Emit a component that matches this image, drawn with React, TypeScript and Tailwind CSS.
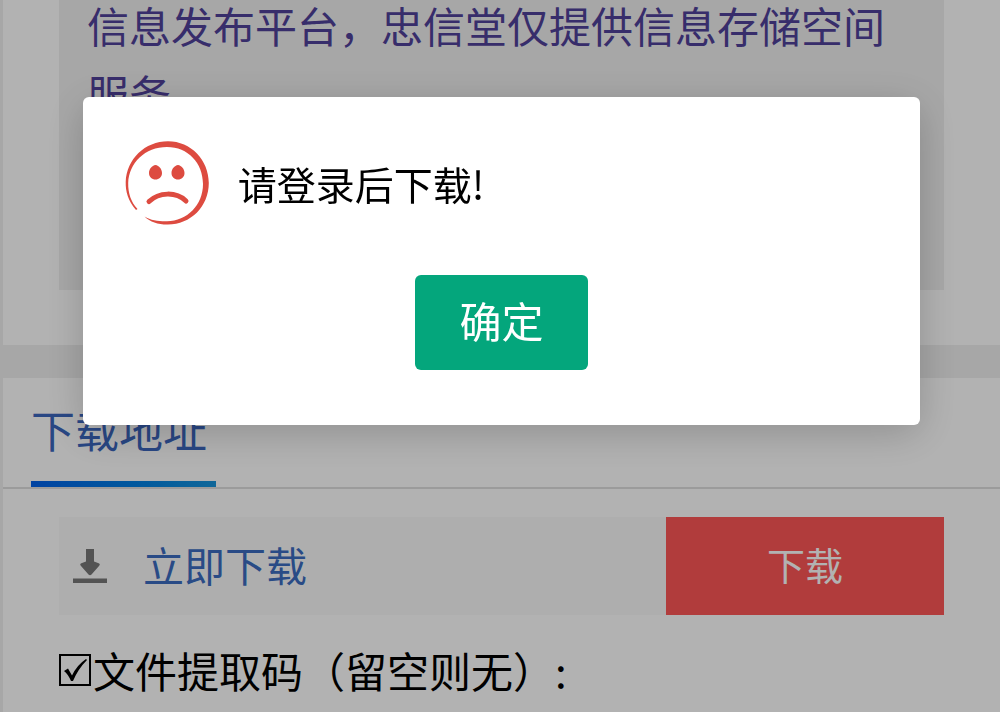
import { useState } from "react";

function SadFace() {
  return (
    <svg viewBox="0 0 84 84" className="size-[84px] shrink-0" fill="none" aria-hidden="true">
      <path
        d="M11 69C3 60 .5 50 .7 41C1.500 18 20 .2 43 .2C66 .2 83.800 19 83.800 42C83.800 66 65 84 42 83.500C33 83.500 25 81 19.500 75.500C26 79.500 34 80.500 42 80.300C62 80 78 64 78 43C78 22 63 6 42 6C20 6 4 22 3.200 42C3 52 6 61 12.500 68Z"
        fill="#dd4b40"
      />
      <path
        d="M30.500 24C34 24.500 37 28 37 32C37 36 34 38.500 30.500 38.500C27 38.500 24 36 24 32C24 28 27 24.500 30.500 24ZM53 24C56.500 24.500 59.500 28 59.500 32C59.500 36 56.500 38.500 53 38.500C49.500 38.500 46.500 36 46.500 32C46.500 28 49.500 24.500 53 24Z"
        fill="#dd4b40"
      />
      <path d="M24 60.500C34 51 51 50.500 61 60" stroke="#dd4b40" strokeWidth="5" strokeLinecap="round" />
    </svg>
  );
}

function DownloadIcon() {
  return (
    <svg viewBox="0 0 34 34" className="size-[34px] shrink-0" fill="#777" aria-hidden="true">
      <path d="M13 0H21V12.500L25 14Q28 15 26 17L18.500 25.500Q17 27 15.500 25.500L8 17Q6 15 9 14L13 12.500Z" />
      <path d="M0 29.500H34V34H0Z" />
    </svg>
  );
}

function LoginDialog({ onClose }: { onClose: () => void }) {
  return (
    <div className="fixed inset-0 flex items-start justify-center bg-black/30 pt-[97px] pl-[3px]">
      <div
        role="alertdialog"
        aria-modal="true"
        aria-labelledby="dialog-message"
        className="flex w-[84%] flex-col rounded-md bg-white px-[42px] pt-11 pb-[55px] shadow-[0_8px_40px_rgba(0,0,0,0.2)]"
      >
        <div className="flex items-center gap-[29px]">
          <SadFace />
          <p id="dialog-message" className="text-[39px] leading-[60px] text-black">
            请登录后下载!
          </p>
        </div>
        <button
          type="button"
          onClick={onClose}
          className="mt-[50px] self-center rounded-md bg-[#04a67c] px-11 pt-3.5 pb-[19px] text-[42px] leading-[62px] text-white"
        >
          确定
        </button>
      </div>
    </div>
  );
}

export default function App() {
  const [open, setOpen] = useState(true);

  return (
    <div className="min-h-screen overflow-hidden bg-[#efefef] pl-[3px] font-['Noto_Sans_CJK_SC',sans-serif]">
      <section className="bg-white px-14 pb-[55px]">
        <p className="-mt-[9px] bg-[#f0f0f0] px-7 pb-[163px] text-[42px] leading-[68px] text-[#50419a]">
          信息发布平台，忠信堂仅提供信息存储空间服务
        </p>
      </section>

      <section className="mt-[33px] bg-white">
        <div className="flex border-b-2 border-[#dedede] px-7">
          <h2 className="flex flex-col text-[44px] leading-[62px] text-[#3b66bd]">
            <span className="pt-5 pr-[9px] pb-[21px]">下载地址</span>
            <span className="h-[6px] bg-linear-to-r from-[#0060e8] to-[#1794dc]" />
          </h2>
        </div>
        <div className="px-14 pt-7 pb-6">
          <div className="flex items-stretch bg-[#fafafa]">
            <a href="#download" className="flex flex-1 items-center gap-9 px-[14px] text-[41px] leading-[62px] text-[#3b6cc0]">
              <DownloadIcon />
              <span className="pb-1">立即下载</span>
            </a>
            <button type="button" className="w-[278px] bg-[#fe5656] pt-4 pb-5 text-[38px] leading-[62px] text-white">
              下载
            </button>
          </div>
          <label className="mt-6 flex items-center text-[42px] leading-[62px] text-black">
            <span className="relative mr-[2px] flex size-8 shrink-0">
              <input type="checkbox" defaultChecked className="peer size-8 appearance-none border-2 border-black" />
              <svg
                viewBox="0 0 32 32"
                className="pointer-events-none absolute inset-0 hidden size-8 peer-checked:block"
                aria-hidden="true"
              >
                <path d="M5 17L9 14.500L13 21.500Q18 11 27 5L28 6Q19 15 14 27H12Q9 20 5 17Z" />
              </svg>
            </span>
            文件提取码（留空则无）:
          </label>
        </div>
      </section>

      {open && <LoginDialog onClose={() => setOpen(false)} />}
    </div>
  );
}
